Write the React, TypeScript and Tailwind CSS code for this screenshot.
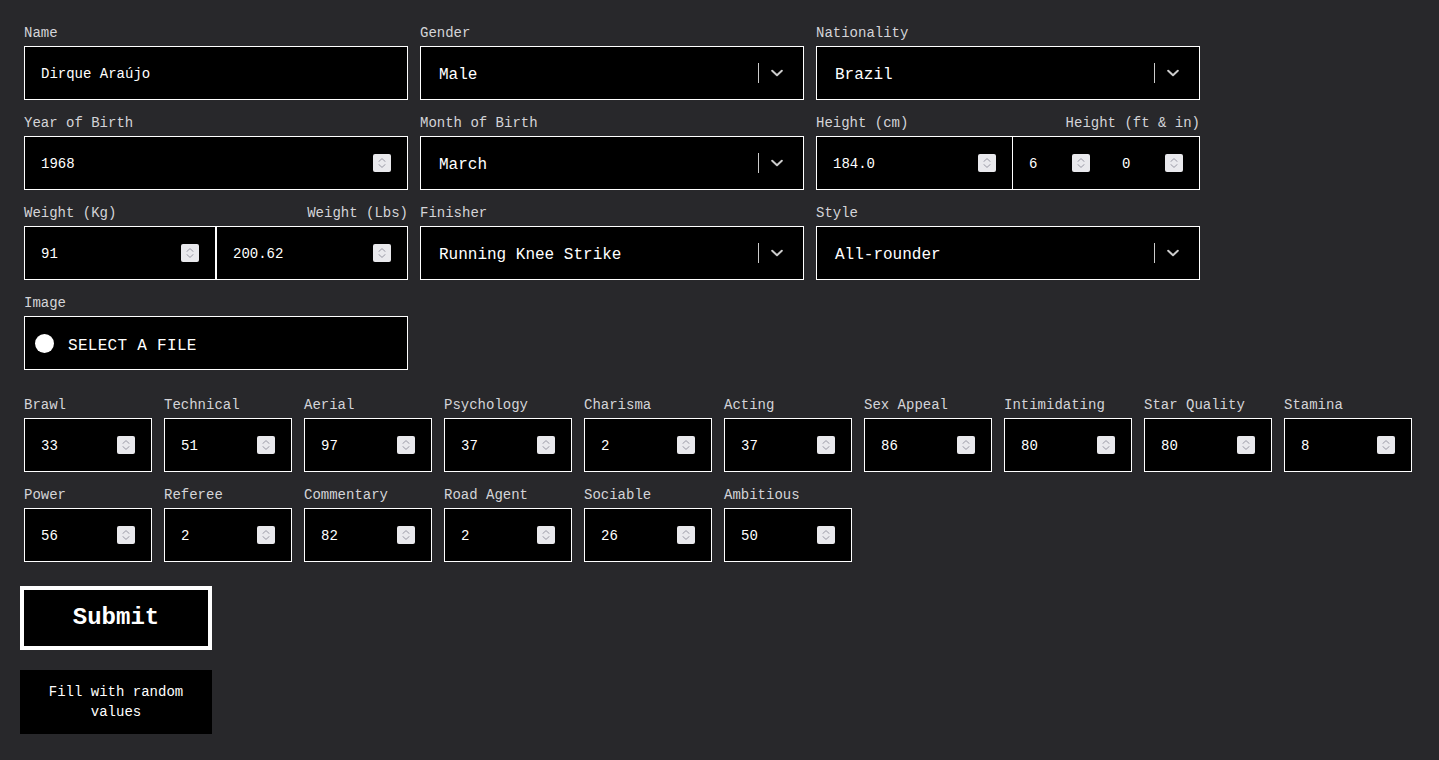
import { useState } from "react";

const font = "font-['Liberation_Mono',monospace]";

function Spinner() {
  return (
    <span className="flex h-[18px] w-[18px] shrink-0 flex-col items-center justify-center gap-[2px] rounded-[2px] bg-[#e9e9ed]">
      <svg width="8" height="4" viewBox="0 0 8 4" fill="none">
        <path d="M0.5 3.8L4 0.6L7.5 3.8" stroke="#9a9aa6" strokeWidth="1" />
      </svg>
      <svg width="8" height="4" viewBox="0 0 8 4" fill="none">
        <path d="M0.5 0.2L4 3.4L7.5 0.2" stroke="#9a9aa6" strokeWidth="1" />
      </svg>
    </span>
  );
}

function NumberBox({ value }: { value: string }) {
  return (
    <div className="flex h-full flex-1 items-center justify-between px-4 text-sm text-white">
      <span className="translate-y-px">{value}</span>
      <Spinner />
    </div>
  );
}

function Label({ children, right }: { children: React.ReactNode; right?: string }) {
  return (
    <div className="mb-1 flex h-5 items-center justify-between text-sm leading-5 text-[#d4d4d8]">
      <span className="translate-y-px">{children}</span>
      {right && <span className="translate-y-px">{right}</span>}
    </div>
  );
}

function SelectBox({ value }: { value: string }) {
  return (
    <div className="flex h-[54px] items-center border border-white bg-black pl-[18px] pr-5 text-base text-white">
      <span className="flex-1 translate-y-[2px]">{value}</span>
      <span className="h-5 w-px bg-[#cccccc]" />
      <svg className="ml-3" width="12" height="12" viewBox="0 0 12 12" fill="none">
        <path d="M1.2 3.8L6 8.2L10.8 3.8" stroke="#cccccc" strokeWidth="2" strokeLinecap="round" strokeLinejoin="round" />
      </svg>
    </div>
  );
}

const stats = [
  ["Brawl", "33"],
  ["Technical", "51"],
  ["Aerial", "97"],
  ["Psychology", "37"],
  ["Charisma", "2"],
  ["Acting", "37"],
  ["Sex Appeal", "86"],
  ["Intimidating", "80"],
  ["Star Quality", "80"],
  ["Stamina", "8"],
  ["Power", "56"],
  ["Referee", "2"],
  ["Commentary", "82"],
  ["Road Agent", "2"],
  ["Sociable", "26"],
  ["Ambitious", "50"],
];

export default function App() {
  const [name] = useState("Dirque Araújo");

  return (
    <div className={`min-h-[760px] bg-[#28282b] pt-[22px] ${font}`}>
      <div className="grid w-[1200px] grid-cols-3 gap-3 pl-6">
        <div>
          <Label>Name</Label>
          <div className="flex h-[54px] items-center border border-white bg-black pl-4 text-sm text-white">
            <span className="translate-y-px">{name}</span>
          </div>
        </div>
        <div>
          <Label>Gender</Label>
          <SelectBox value="Male" />
        </div>
        <div>
          <Label>Nationality</Label>
          <SelectBox value="Brazil" />
        </div>

        <div>
          <Label>Year of Birth</Label>
          <div className="flex h-[54px] border border-white bg-black">
            <NumberBox value="1968" />
          </div>
        </div>
        <div>
          <Label>Month of Birth</Label>
          <SelectBox value="March" />
        </div>
        <div>
          <Label right="Height (ft & in)">Height (cm)</Label>
          <div className="flex h-[54px]">
            <div className="flex w-[197px] border border-white bg-black">
              <NumberBox value="184.0" />
            </div>
            <div className="-ml-px flex flex-1 border border-white bg-black">
              <NumberBox value="6" />
              <NumberBox value="0" />
            </div>
          </div>
        </div>

        <div>
          <Label right="Weight (Lbs)">Weight (Kg)</Label>
          <div className="flex h-[54px]">
            <div className="flex w-[192px] border border-white bg-black">
              <NumberBox value="91" />
            </div>
            <div className="flex flex-1 border border-white bg-black">
              <NumberBox value="200.62" />
            </div>
          </div>
        </div>
        <div>
          <Label>Finisher</Label>
          <SelectBox value="Running Knee Strike" />
        </div>
        <div>
          <Label>Style</Label>
          <SelectBox value="All-rounder" />
        </div>

        <div>
          <Label>Image</Label>
          <div className="flex h-[54px] items-center gap-[14px] border border-white bg-black pl-[10px] text-base tracking-[0.3px] text-white">
            <span className="h-[19px] w-[19px] rounded-full bg-white" />
            <span className="translate-y-[3px]">SELECT A FILE</span>
          </div>
        </div>
      </div>

      <div className="mt-6 grid w-[1412px] grid-cols-10 gap-3 pl-6">
        {stats.map(([label, value]) => (
          <div key={label}>
            <Label>{label}</Label>
            <div className="flex h-[54px] border border-white bg-black">
              <NumberBox value={value} />
            </div>
          </div>
        ))}
      </div>

      <div className="mt-6 flex flex-col gap-5 pl-5">
        <button className="h-16 w-48 border-4 border-white bg-black text-2xl font-bold text-white">Submit</button>
        <button className="h-16 w-48 bg-black px-6 text-sm leading-5 text-white">Fill with random values</button>
      </div>
    </div>
  );
}
